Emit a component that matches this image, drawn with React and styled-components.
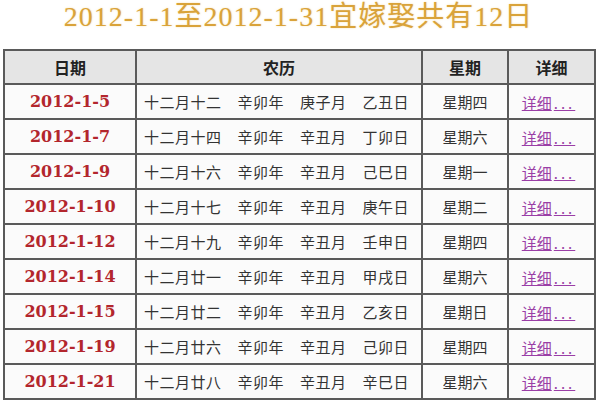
import React from 'react'
import styled, { createGlobalStyle } from 'styled-components'

const rows = [
  { date: '2012-1-5', lunar: ['十二月十二', '辛卯年', '庚子月', '乙丑日'], week: '星期四' },
  { date: '2012-1-7', lunar: ['十二月十四', '辛卯年', '辛丑月', '丁卯日'], week: '星期六' },
  { date: '2012-1-9', lunar: ['十二月十六', '辛卯年', '辛丑月', '己巳日'], week: '星期一' },
  { date: '2012-1-10', lunar: ['十二月十七', '辛卯年', '辛丑月', '庚午日'], week: '星期二' },
  { date: '2012-1-12', lunar: ['十二月十九', '辛卯年', '辛丑月', '壬申日'], week: '星期四' },
  { date: '2012-1-14', lunar: ['十二月廿一', '辛卯年', '辛丑月', '甲戌日'], week: '星期六' },
  { date: '2012-1-15', lunar: ['十二月廿二', '辛卯年', '辛丑月', '乙亥日'], week: '星期日' },
  { date: '2012-1-19', lunar: ['十二月廿六', '辛卯年', '辛丑月', '己卯日'], week: '星期四' },
  { date: '2012-1-21', lunar: ['十二月廿八', '辛卯年', '辛丑月', '辛巳日'], week: '星期六' },
]

const GlobalStyle = createGlobalStyle`
  html, body {
    margin: 0;
    padding: 0;
    background: #ffffff;
    width: 600px;
    height: 400px;
    overflow: hidden;
  }
`

export default function App() {
  return (
    <>
      <GlobalStyle />
      <Page>
        <Title>2012-1-1至2012-1-31宜嫁娶共有12日</Title>
        <Table>
          <colgroup>
            <col style={{ width: 132 }} />
            <col style={{ width: 286 }} />
            <col style={{ width: 86 }} />
            <col style={{ width: 87 }} />
          </colgroup>
          <thead>
            <tr>
              <Th>日期</Th>
              <Th>农历</Th>
              <Th>星期</Th>
              <Th>详细</Th>
            </tr>
          </thead>
          <tbody>
            {rows.map((r) => (
              <tr key={r.date}>
                <DateCell>{r.date}</DateCell>
                <LunarCell>
                  <Lunar>
                    {r.lunar.map((t, i) => (
                      <span key={i}>{t}</span>
                    ))}
                  </Lunar>
                </LunarCell>
                <WeekCell>{r.week}</WeekCell>
                <LinkCell>
                  <DetailLink href='#'>
                    详细<Dots>...</Dots>
                  </DetailLink>
                </LinkCell>
              </tr>
            ))}
          </tbody>
        </Table>
      </Page>
    </>
  )
}

const Page = styled.div`
  width: 600px;
  height: 400px;
  overflow: hidden;
  padding: 0 6px 0 3px;
  box-sizing: border-box;
`

const Title = styled.h1`
  margin: 0;
  height: 48px;
  padding-top: 1px;
  box-sizing: border-box;
  text-align: center;
  font-family: 'Liberation Serif', 'Noto Sans CJK SC', serif;
  font-size: 28px;
  letter-spacing: 1px;
  font-weight: normal;
  line-height: 32px;
  color: #d9a33a;
  text-shadow: 0 0 2px rgba(240, 200, 110, 0.6);
`

const Table = styled.table`
  width: 591px;
  margin-top: 1px;
  border-collapse: collapse;
  table-layout: fixed;
  font-family: 'Noto Sans CJK SC', sans-serif;
  border: 2px solid #555;
  td,
  th {
    border: 2px solid #5a5a5a;
    height: 33px;
    padding: 0;
  }
  tbody tr {
    background: #fbfbfb;
  }
`

const Th = styled.th`
  background: #e5e5e5;
  font-size: 16px;
  font-weight: bold;
  color: #222;
  text-align: center;
  height: 32px !important;
`

const DateCell = styled.td`
  text-align: center;
  font-family: 'DejaVu Serif', serif;
  font-weight: bold;
  font-size: 16px;
  color: #b3262d;
`

const LunarCell = styled.td`
  padding-left: 7px !important;
`

const Lunar = styled.div`
  display: flex;
  gap: 16px;
  font-size: 15px;
  letter-spacing: 0.5px;
  color: #333;
`

const WeekCell = styled.td`
  text-align: center;
  font-size: 15px;
  color: #333;
`

const LinkCell = styled.td`
  text-align: center;
  padding-right: 6px !important;
`

const DetailLink = styled.a`
  font-size: 15px;
  color: #9a3ea6;
  text-decoration: underline;
`

const Dots = styled.span`
  letter-spacing: 3px;
  padding-left: 2px;
`
